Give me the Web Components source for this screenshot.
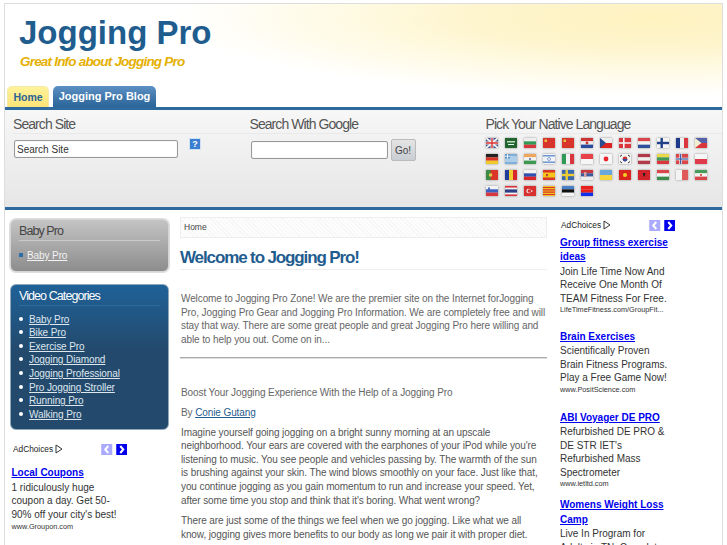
<!DOCTYPE html>
<html>
<head>
<meta charset="utf-8">
<title>Jogging Pro</title>
<style>
  html, body { margin: 0; height: 545px; overflow: hidden; background: #fff; }
  body { font: 10px "Liberation Sans", Arial, sans-serif; color: #666; }
</style>
</head>
<body>
<site-page>
  <site-header slot="header" title="Jogging Pro" tagline="Great Info about Jogging Pro"></site-header>
  <tool-panel slot="panel"></tool-panel>

  <div slot="left">
    <side-box kind="grey" heading="Baby Pro"><a href="#">Baby Pro</a></side-box>
    <side-box kind="blue" heading="Video Categories">
      <a href="#">Baby Pro</a><a href="#">Bike Pro</a><a href="#">Exercise Pro</a><a href="#">Jogging Diamond</a>
      <a href="#">Jogging Professional</a><a href="#">Pro Jogging Stroller</a><a href="#">Running Pro</a><a href="#">Walking Pro</a>
    </side-box>
    <ad-bar style="padding-left:3px;margin-top:10px"></ad-bar>
    <ad-item style="margin:10px 0 0 1.5px" heading="Local Coupons" site="www.Groupon.com">1 ridiculously huge coupon a day. Get 50-90% off your city's best!</ad-item>
  </div>

  <main-article slot="main"></main-article>

  <div slot="right">
    <ad-bar style="padding-left:1px"></ad-bar>
    <ad-item style="margin-top:3.5px" heading="Group fitness exercise ideas" site="LifeTimeFitness.com/GroupFit...">Join Life Time Now And Receive One Month Of TEAM Fitness For Free.</ad-item>
    <ad-item style="margin-top:15.5px" heading="Brain Exercises" site="www.PositScience.com">Scientifically Proven Brain Fitness Programs. Play a Free Game Now!</ad-item>
    <ad-item style="margin-top:16.5px" heading="ABI Voyager DE PRO" site="www.ietltd.com">Refurbished DE PRO &amp; DE STR IET's Refurbished Mass Spectrometer</ad-item>
    <ad-item style="margin-top:10px" heading="Womens Weight Loss Camp" site="">Live In Program for Adults in TN. Complete</ad-item>
  </div>
</site-page>

<script>
class SitePage extends HTMLElement {
  constructor() {
    super();
    this.attachShadow({mode: 'open'}).innerHTML = `
      <style>
        :host { display: block; margin: 3px 4px 0; border: 1px solid #ddd; border-bottom: 0; height: 542px; overflow: hidden; box-sizing: border-box; }
        #cols { display: grid; grid-template-columns: 170px 367px 163px; column-gap: 0; padding: 8px 0 0 5px; }
        #left { padding-top: 1px; }
        #right { padding-left: 13px; }
      </style>
      <slot name="header"></slot>
      <slot name="panel"></slot>
      <div id="cols">
        <div id="left"><slot name="left"></slot></div>
        <div><slot name="main"></slot></div>
        <div id="right"><slot name="right"></slot></div>
      </div>`;
  }
}

class SiteHeader extends HTMLElement {
  constructor() {
    super();
    const title = this.getAttribute('title');
    const tagline = this.getAttribute('tagline');
    this.attachShadow({mode: 'open'}).innerHTML = `
      <style>
        :host { display: block; height: 103px; box-sizing: border-box; padding: 9px 0 0 14px; position: relative;
          background: radial-gradient(ellipse 480px 78px at 650px 14px, #fef2bf 0%, #fef5cf 40%, rgba(255,250,226,.75) 72%, rgba(255,255,255,0) 100%);
          font-family: "Liberation Sans", Arial, sans-serif; }
        h1 { margin: 0; font-size: 33px; line-height: 40px; color: #1f5d8f; font-weight: bold; }
        p { margin: 0 0 0 1px; font-size: 13.5px; line-height: 17px; color: #e5b000; font-weight: bold; font-style: italic; letter-spacing: -.8px; }
        nav { display: flex; gap: 4px; align-items: flex-end; position: absolute; left: 2px; bottom: 0; }
        a { display: block; height: 21px; line-height: 20px; font-size: 11px; font-weight: bold; text-decoration: none; border-radius: 5px 5px 0 0; }
        .home { width: 42px; font-size: 10.5px; text-align: center; color: #2a6496; background: linear-gradient(#fff29a, #fde377); border: 1px solid #f3e9a8; border-bottom: 0; box-sizing: border-box; }
        .blog { width: 103px; text-align: center; color: #fff; background: linear-gradient(#5c90c4, #2a6498); }
      </style>
      <h1>${title}</h1>
      <p>${tagline}</p>
      <nav><a class="home" href="#">Home</a><a class="blog" href="#">Jogging Pro Blog</a></nav>`;
  }
}

// small flag drawings, keyed by a short name; stripes go through h/v
const FLAG_ART = {
  uk: `<rect width="12" height="10" fill="#3b4f8f"/><path d="M0 0L12 10M12 0L0 10" stroke="#eee" stroke-width="2"/><path d="M6 0V10M0 5H12" stroke="#eee" stroke-width="3"/><path d="M6 0V10M0 5H12" stroke="#d33" stroke-width="1.4"/>`,
  sa: `<rect width="12" height="10" fill="#22632e"/><rect x="2" y="3" width="8" height="1.5" fill="#bfe0bf"/><rect x="3" y="6" width="6" height="1" fill="#dfe"/>`,
  cn: `<rect width="12" height="10" fill="#d9342c"/><rect x="1.5" y="1.5" width="2.5" height="2.5" fill="#e7c13b"/>`,
  kr: `<rect width="12" height="10" fill="#f3f3f3"/><circle cx="6" cy="5" r="2.4" fill="#c33"/><path d="M3.6 5a2.4 2.4 0 0 0 4.8 0z" fill="#2a4f9f"/><path d="M1 2.5L3 1M9 1L11 2.5M1 7.5L3 9M9 9L11 7.5" stroke="#333"/>`,
  gr: `<rect width="12" height="10" fill="#7fb0dc"/><path d="M0 3H12M0 5H12M0 7H12" stroke="#dceaf6"/><rect width="5" height="4.5" fill="#5b93c9"/><path d="M2.5 0V4.5M0 2.2H5" stroke="#eaf2f9"/>`,
  il: `<rect width="12" height="10" fill="#f2f4f8"/><rect y="1" width="12" height="1.5" fill="#6f94cf"/><rect y="7.5" width="12" height="1.5" fill="#6f94cf"/><circle cx="6" cy="5" r="1.5" fill="none" stroke="#6f94cf" stroke-width=".8"/>`,
  in: `<rect width="12" height="3.4" fill="#eca75a"/><rect y="3.3" width="12" height="3.4" fill="#f3f3f3"/><rect y="6.6" width="12" height="3.4" fill="#3c9a50"/><circle cx="6" cy="5" r="1" fill="#5568a8"/>`,
  hr: `<rect width="12" height="3.4" fill="#c33"/><rect y="3.3" width="12" height="3.4" fill="#eee"/><rect y="6.6" width="12" height="3.4" fill="#2a4b9e"/><circle cx="6" cy="5" r="1.4" fill="#c33"/>`,
  cz: `<rect width="12" height="5" fill="#eee"/><rect y="5" width="12" height="5" fill="#d22"/><path d="M0 0L6 5L0 10Z" fill="#2a4b8e"/>`,
  ph: `<rect width="12" height="5" fill="#5560a8"/><rect y="5" width="12" height="5" fill="#d9363e"/><path d="M0 0L6.5 5L0 10Z" fill="#f3eed0"/>`,
  es: `<rect width="12" height="10" fill="#d9352b"/><rect y="2.5" width="12" height="5" fill="#f5c518"/><rect x="3" y="4" width="2" height="2.2" fill="#b44"/>`,
  ca: `<rect width="12" height="10" fill="#f2c01f"/><path d="M0 1.5H12M0 3.8H12M0 6.2H12M0 8.5H12" stroke="#d9352b" stroke-width="1.2"/>`,
  al: `<rect width="12" height="10" fill="#d2232a"/><path d="M5 3h2.5l-.5 2 -1 2 -1-2z" fill="#222"/>`,
  dk: `<rect width="12" height="10" fill="#d9363e"/><rect x="4" width="1.6" height="10" fill="#f3f3f3"/><rect y="4.2" width="12" height="1.6" fill="#f3f3f3"/>`,
  fi: `<rect width="12" height="10" fill="#f3f3f3"/><rect x="3.5" width="2.4" height="10" fill="#1f3f88"/><rect y="3.8" width="12" height="2.4" fill="#1f3f88"/>`,
  no: `<rect width="12" height="10" fill="#d9464a"/><rect x="3.3" width="2.6" height="10" fill="#eee"/><rect y="3.7" width="12" height="2.6" fill="#eee"/><rect x="4" width="1.2" height="10" fill="#3f5fa8"/><rect y="4.4" width="12" height="1.2" fill="#3f5fa8"/>`,
  se: `<rect width="12" height="10" fill="#3a68b0"/><rect x="3.5" width="2.4" height="10" fill="#f0cc30"/><rect y="3.8" width="12" height="2.4" fill="#f0cc30"/>`,
  pt: `<rect width="12" height="10" fill="#d9352b"/><rect width="4.6" height="10" fill="#3e8a46"/><circle cx="4.6" cy="5" r="1.8" fill="#e8c84a"/>`,
  si: `<rect width="12" height="3.4" fill="#f3f3f3"/><rect y="3.3" width="12" height="3.4" fill="#3c62c0"/><rect y="6.6" width="12" height="3.4" fill="#d9363e"/><rect x="2" y="1.5" width="2" height="2.5" fill="#4a6ac4"/>`,
  th: `<rect width="12" height="10" fill="#f3f3f3"/><rect width="12" height="1.6" fill="#d9363e"/><rect y="8.4" width="12" height="1.6" fill="#d9363e"/><rect y="3.4" width="12" height="3.2" fill="#2e3f86"/>`,
  tr: `<rect width="12" height="10" fill="#d8302f"/><circle cx="4.6" cy="5" r="2.2" fill="#f5f5f5"/><circle cx="5.3" cy="5" r="1.8" fill="#d8302f"/><rect x="7" y="4.4" width="1.4" height="1.4" fill="#f5f5f5"/>`,
  rs: `<rect width="12" height="3.4" fill="#c8383d"/><rect y="3.3" width="12" height="3.4" fill="#3b5a9e"/><rect y="6.6" width="12" height="3.4" fill="#eee"/><rect x="3" y="2" width="2.4" height="5" fill="#d8a0a0"/>`,
  ir: `<rect width="12" height="3.4" fill="#4a9a5a"/><rect y="3.3" width="12" height="3.4" fill="#f3f3f3"/><rect y="6.6" width="12" height="3.4" fill="#d9464a"/><circle cx="6" cy="5" r="1" fill="#c33"/>`,
  jp: `<rect width="12" height="10" fill="#f6f6f6"/><circle cx="6" cy="5" r="2.4" fill="#e8242c"/>`,
  vn: `<rect width="12" height="10" fill="#d8261f"/><circle cx="6" cy="5" r="2" fill="#f5d020"/>`
};

function stripes(dir, cols) {
  const step = (dir === 'h' ? 10 : 12) / cols.length;
  return cols.map((c, i) => dir === 'h'
    ? `<rect y="${i * step}" width="12" height="${step + .1}" fill="${c}"/>`
    : `<rect x="${i * step}" width="${step + .1}" height="10" fill="${c}"/>`).join('');
}

class FlagIcon extends HTMLElement {
  constructor() {
    super();
    const spec = this.getAttribute('spec').split(' ');
    const art = FLAG_ART[spec[0]] || stripes(spec[0], spec.slice(1));
    this.attachShadow({mode: 'open'}).innerHTML = `
      <style>
        :host { display: block; width: 12px; height: 10px; line-height: 0; box-shadow: 0 0 2px rgba(90,90,90,.65); }
        svg { display: block; }
      </style>
      <svg width="12" height="10" viewBox="0 0 12 10">${art}</svg>`;
  }
}

const FLAGS = [
  'uk', 'sa', 'h #eee #2f9a55 #d9363e', 'cn', 'cn', 'hr', 'cz', 'dk', 'h #d9464a #f3f3f3 #2f4f9a', 'fi', 'v #1f3a8a #eee #d9363e', 'ph',
  'h #222 #d9352b #f0c929', 'gr', 'in', 'il', 'v #2f9a55 #f3f3f3 #d9363e', 'h #e8414a #f6f6f6', 'jp', 'kr', 'h #b03a48 #eee #b03a48', 'h #ecd64a #3f9a56 #d9363e', 'no', 'h #f6f6f6 #e0394a',
  'pt', 'v #1f3f9a #f0cc30 #d9262c', 'h #f3f3f3 #3050b0 #d9262c', 'es', 'se', 'rs', 'h #6aa8dc #f5d63c', 'vn', 'al', 'h #d9464a #f3f3f3 #3a8a4a', 'v #f3f3f3 #e05a5a', 'ir',
  'si', 'th', 'tr', 'ca', 'h #4a80c8 #111 #f3f3f3', 'h #e8201c #e8201c #1030e8'
];

class ToolPanel extends HTMLElement {
  constructor() {
    super();
    const flags = FLAGS.map(f => `<flag-icon spec="${f}"></flag-icon>`).join('');
    this.attachShadow({mode: 'open'}).innerHTML = `
      <style>
        :host { display: block; border-top: 3px solid #2f6a9f; border-bottom: 3px solid #2f6a9f; height: 103px; box-sizing: border-box;
          background: linear-gradient(#f7f7f7, #e6e6e6); font-family: "Liberation Sans", Arial, sans-serif; }
        #cols { display: grid; grid-template-columns: 236.5px 236px 1fr; padding: 6px 0 0 8px; }
        h3 { margin: 0 0 6px; height: 17px; line-height: 16px; font-size: 14px; font-weight: normal; color: #555; letter-spacing: -.93px; border-bottom: 1px solid #e9e9e9; }
        .row { display: flex; align-items: flex-start; }
        input { font: 10px "Liberation Sans", Arial, sans-serif; color: #333; box-sizing: border-box; height: 18px; padding: 0 2px; border: 1px solid #999; border-radius: 2px; background: #fff; outline: 0; box-shadow: inset 0 0 1px #bbb; margin: 0; }
        button { font: 10px "Liberation Sans", Arial, sans-serif; color: #444; width: 25px; height: 22px; padding: 0; margin: -2px 0 0 3px; border: 1px solid #bbb; border-radius: 2px; background: linear-gradient(#e4e4e4, #c9ced4); }
        #help { width: 12px; height: 12px; margin: -2px 0 0 11px; background: #3a7fd0; border: 1px solid #cfe0f2; box-sizing: border-box; color: #fff; font: bold 9px/10px "Liberation Sans", sans-serif; text-align: center; }
        #flags { display: grid; grid-template-columns: repeat(12, 12px); column-gap: 7px; row-gap: 6px; margin-top: -1px; }
        #g3 h3 { margin-bottom: 5px; }
      </style>
      <div id="cols">
        <div>
          <h3>Search Site</h3>
          <div class="row" style="padding-left:1px"><input style="width:164px" value="Search Site"><div id="help">?</div></div>
        </div>
        <div>
          <h3>Search With Google</h3>
          <div class="row" style="padding:1px 0 0 1px"><input style="width:137px"><button>Go!</button></div>
        </div>
        <div id="g3">
          <h3>Pick Your Native Language</h3>
          <div id="flags">${flags}</div>
        </div>
      </div>`;
  }
}

class SideBox extends HTMLElement {
  constructor() {
    super();
    const grey = this.getAttribute('kind') === 'grey';
    this.attachShadow({mode: 'open'}).innerHTML = `
      <style>
        :host { display: block; width: 159px; box-sizing: border-box; border-radius: 6px; margin-bottom: 12px; padding: 3px 8px 8px;
          font-family: "Liberation Sans", Arial, sans-serif;
          ${grey ? 'background: linear-gradient(#c4c4c4, #8d8d8d); border: 1px solid #d5d5d5; box-shadow: 0 0 0 1px #ddd;'
                 : 'background: linear-gradient(#1f6198, #234a6d 45%, #234a6d); border: 1px solid #8fa6bc;'} }
        h4 { margin: 0 0 ${grey ? 8 : 7}px; height: 17px; line-height: 17px; font-size: 12.5px; font-weight: normal; letter-spacing: -.92px; color: ${grey ? '#444' : '#fff'};
          border-bottom: 1px solid ${grey ? '#c9c9c9' : '#2f6a9a'}; }
        ::slotted(a) { display: block; color: ${grey ? '#f2f2f2' : '#dfe7ee'}; font-size: 10px; line-height: 13.6px; letter-spacing: -.1px; }
        ::slotted(a)::before { content: ""; display: inline-block; width: 4px; height: 4px; vertical-align: 2px;
          ${grey ? 'background: #2a6ea8; margin-right: 4px;' : 'background: #fff; border-radius: 50%; margin-right: 6px;'} }
      </style>
      <h4>${this.getAttribute('heading')}</h4>
      <slot></slot>`;
  }
}

class AdBar extends HTMLElement {
  constructor() {
    super();
    this.attachShadow({mode: 'open'}).innerHTML = `
      <style>
        :host { display: flex; align-items: center; height: 14px; font: 8.3px "Liberation Sans", Arial, sans-serif; color: #222; }
        #label { display: flex; align-items: center; gap: 2px; width: 88px; }
        #btns { display: flex; gap: 3px; }
        .b { width: 11.5px; height: 11px; display: block; }
      </style>
      <div id="label">
        <span>AdChoices</span>
        <svg width="8" height="10" viewBox="0 0 8 10"><path d="M1 1L7 5L1 9Z" fill="none" stroke="#333"/></svg>
      </div>
      <div id="btns">
        <svg class="b" viewBox="0 0 11 11"><rect width="11" height="11" fill="#aaaaff"/><path d="M7 2L4 5.5L7 9" fill="none" stroke="#fff" stroke-width="2"/></svg>
        <svg class="b" viewBox="0 0 11 11"><rect width="11" height="11" fill="#0000ee"/><path d="M4 2L7 5.5L4 9" fill="none" stroke="#fff" stroke-width="2"/></svg>
      </div>`;
  }
}

class AdItem extends HTMLElement {
  constructor() {
    super();
    const site = this.getAttribute('site');
    this.attachShadow({mode: 'open'}).innerHTML = `
      <style>
        :host { display: block; width: 110px; font: 10px/13.6px "Liberation Sans", Arial, sans-serif; color: #333; }
        a { display: block; font-weight: bold; color: #0000ee; line-height: 14.5px; }
        small { display: block; font-size: 7.3px; line-height: 9px; color: #333; white-space: nowrap; }
      </style>
      <a href="#">${this.getAttribute('heading')}</a>
      <div><slot></slot></div>
      ${site ? `<small>${site}</small>` : ''}`;
  }
}

class MainArticle extends HTMLElement {
  constructor() {
    super();
    this.attachShadow({mode: 'open'}).innerHTML = `
      <style>
        :host { display: block; font: 10px/13.6px "Liberation Sans", Arial, sans-serif; color: #666; letter-spacing: -.1px; }
        #crumb { margin-top: -1px; height: 21px; box-sizing: border-box; border: 1px solid #eee; padding-left: 3px; line-height: 18px; font-size: 8.5px; letter-spacing: 0; color: #444; background: repeating-linear-gradient(45deg, #f6f6f6 0 1px, #fdfdfd 1px 3px); }
        h2 { margin: 6px 0 0; height: 25px; line-height: 27px; font-size: 17px; font-weight: bold; letter-spacing: -1.12px; color: #1f5d8f; border-bottom: 1px solid #eee; }
        p { margin: 0; padding-left: 1px; }
        #intro { margin-top: 22px; }
        hr { margin: 11px 0 0; border: 0; border-top: 1px solid #aaa; border-bottom: 1px solid #ddd; }
        #boost { margin-top: 27px; }
        #by { margin-top: 6px; }
        #by a { color: #1f5d8f; }
        #b1 { margin-top: 6px; color: #555; padding-right: 5px; }
        #b2 { margin-top: 7px; color: #555; }
      </style>
      <div id="crumb">Home</div>
      <h2>Welcome to Jogging Pro!</h2>
      <p id="intro">Welcome to Jogging Pro Zone! We are the premier site on the Internet forJogging Pro, Jogging Pro Gear and Jogging Pro Information. We are completely free and will stay that way. There are some great people and great Jogging Pro here willing and able to help you out. Come on in...</p>
      <hr>
      <p id="boost">Boost Your Jogging Experience With the Help of a Jogging Pro</p>
      <p id="by">By <a href="#">Conie Gutang</a></p>
      <p id="b1">Imagine yourself going jogging on a bright sunny morning at an upscale neighborhood. Your ears are covered with the earphones of your iPod while you're listening to music. You see people and vehicles passing by. The warmth of the sun is brushing against your skin. The wind blows smoothly on your face. Just like that, you continue jogging as you gain momentum to run and increase your speed. Yet, after some time you stop and think that it's boring. What went wrong?</p>
      <p id="b2">There are just some of the things we feel when we go jogging. Like what we all know, jogging gives more benefits to our body as long we pair it with proper diet.</p>`;
  }
}

customElements.define('flag-icon', FlagIcon);
customElements.define('tool-panel', ToolPanel);
customElements.define('site-page', SitePage);
customElements.define('site-header', SiteHeader);
customElements.define('side-box', SideBox);
customElements.define('ad-bar', AdBar);
customElements.define('ad-item', AdItem);
customElements.define('main-article', MainArticle);
</script>
</body>
</html>
